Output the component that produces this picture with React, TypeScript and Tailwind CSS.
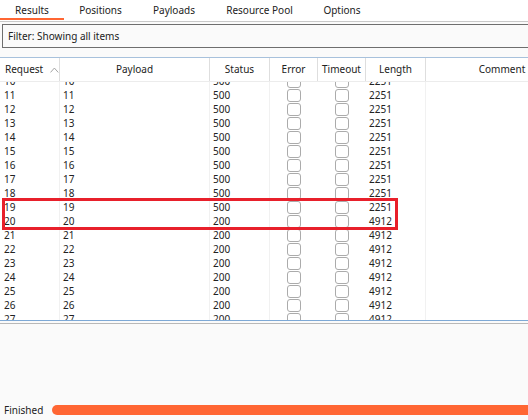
import React from 'react'

const tabs = [
  { label: 'Results', w: 'w-[64px]', active: true },
  { label: 'Positions', w: 'w-[73px]' },
  { label: 'Payloads', w: 'w-[74px]' },
  { label: 'Resource Pool', w: 'w-[97px]' },
  { label: 'Options', w: 'w-[68px]' },
]

const cols = [
  { key: 'req', label: 'Request', w: 'w-[60px]' },
  { key: 'payload', label: 'Payload', w: 'w-[150px]' },
  { key: 'status', label: 'Status', w: 'w-[60px]' },
  { key: 'error', label: 'Error', w: 'w-[48px]' },
  { key: 'timeout', label: 'Timeout', w: 'w-[48px]' },
  { key: 'length', label: 'Length', w: 'w-[60px]' },
  { key: 'comment', label: 'Comment', w: 'w-[152px]' },
]

const rows = Array.from({ length: 18 }, (_, i) => {
  const n = i + 10
  return { n, status: n < 20 ? 500 : 200, length: n < 20 ? 2251 : 4912 }
})

function Check() {
  return <div className="w-[14px] h-[13px] rounded-[3px] border-[1.5px] border-[#ababab] bg-white" />
}

export default function App() {
  return (
    <div className="w-[528px] h-[420px] overflow-hidden bg-[#fafafa] text-[#222] text-[10px] flex flex-col" style={{ fontFamily: '"Noto Sans", sans-serif' }}>
      {/* tabs */}
      <div className="h-[22px] shrink-0 flex bg-white border-b border-[#c9c9c9]">
        {tabs.map(t => (
          <div key={t.label} className={`${t.w} shrink-0 flex items-center justify-center relative`}>
            <span className="-mt-[1px]">{t.label}</span>
            {t.active && <div className="absolute left-0 right-0 bottom-[1px] h-[2px] bg-[#ff6633]" />}
          </div>
        ))}
      </div>

      {/* filter */}
      <div className="shrink-0 pt-[2px] pl-[2px] -mr-[4px]">
        <div className="h-[24px] border border-[#6e6e6e] bg-[#fafafa] flex items-center pl-[5px]">
          Filter: Showing all items
        </div>
      </div>

      <div className="h-[9px] shrink-0" />

      {/* table */}
      <div className="shrink-0 bg-white border-t border-[#a7c1dc] w-[578px]">
        <div className="h-[24px] flex border-b border-[#ececec]">
          {cols.map((c, i) => (
            <div key={c.key} className={`${c.w} shrink-0 flex items-center ${i === 0 ? 'pl-[5px]' : 'justify-center'} ${i < cols.length - 1 ? 'border-r border-[#dedede]' : ''}`}>
              <span>{c.label}</span>
              {i === 0 && (
                <svg width="9" height="6" viewBox="0 0 9 6" className="ml-[7px]">
                  <path d="M0.5 5.5 L4.5 1 L8.5 5.5" fill="none" stroke="#a0a0a0" strokeWidth="1" />
                </svg>
              )}
            </div>
          ))}
        </div>

        <div className="h-[238px] overflow-hidden relative">
          <div className="-mt-[8px]">
            {rows.map(r => (
              <div key={r.n} className="h-[14px] flex items-center">
                <div className="w-[60px] shrink-0 h-full flex items-center pl-[4px] border-r border-[#f1f1f1]">{r.n}</div>
                <div className="w-[150px] shrink-0 h-full flex items-center pl-[3px] border-r border-[#f1f1f1]">{r.n}</div>
                <div className="w-[60px] shrink-0 h-full flex items-center pl-[3px] border-r border-[#f1f1f1]">{r.status}</div>
                <div className="w-[48px] shrink-0 h-full flex items-center justify-center"><Check /></div>
                <div className="w-[48px] shrink-0 h-full flex items-center justify-center"><Check /></div>
                <div className="w-[60px] shrink-0 h-full flex items-center pl-[3px] border-r border-[#f1f1f1]">{r.length}</div>
                <div className="w-[152px] shrink-0 h-full" />
              </div>
            ))}
          </div>
          <div className="absolute left-[2px] top-[116px] w-[396px] h-[32px] border-[3px] border-[#e8202b]" />
        </div>
      </div>

      <div className="shrink-0 h-[1px] bg-[#7ea9d6]" />
      <div className="shrink-0 h-[2px]" />
      <div className="shrink-0 h-[1px] bg-[#b8b8b8]" />

      {/* bottom panel */}
      <div className="flex-1 flex flex-col justify-end">
        <div className="flex items-center h-[16px] mb-[2px]">
          <span className="pl-[4px] w-[52px] shrink-0">Finished</span>
          <div className="flex-1 h-[10px] rounded-l-full bg-[#ff6633]" />
        </div>
      </div>
    </div>
  )
}
